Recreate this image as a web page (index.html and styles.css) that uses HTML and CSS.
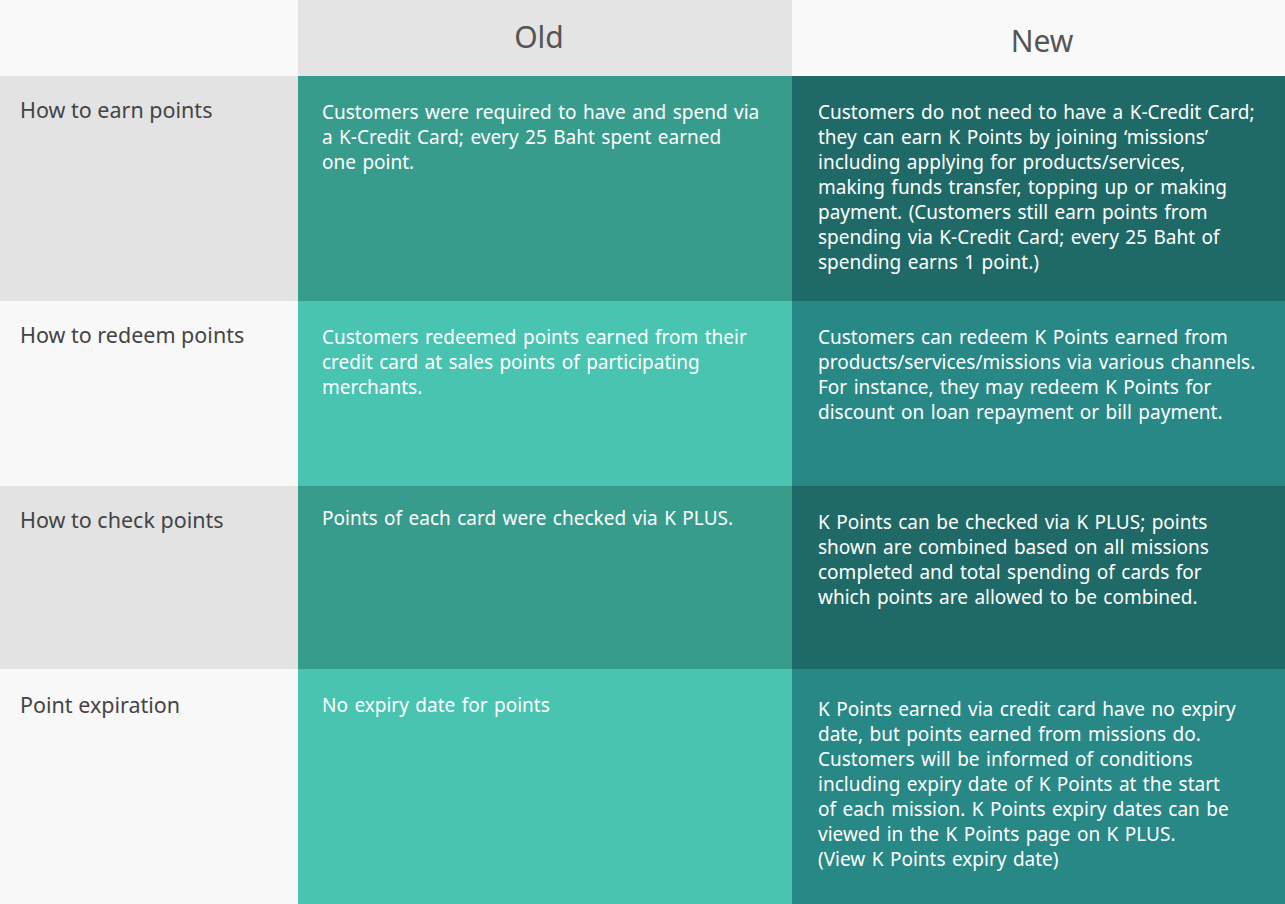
FILE: index.html
```html
<!DOCTYPE html>
<html lang="en">
<head>
<meta charset="utf-8">
<title>K Points comparison</title>
<link rel="stylesheet" href="styles.css">
</head>
<body>
<div class="table">
  <div class="cell head-blank"></div>
  <div class="cell head head-old">Old</div>
  <div class="cell head head-new">New</div>

  <div class="cell label dark">How to earn points</div>
  <div class="cell old dark">Customers were required to have and spend via a K-Credit Card; every 25 Baht spent earned one point.</div>
  <div class="cell new dark">Customers do not need to have a K-Credit Card; they can earn K Points by joining ‘missions’ including applying for products/services, making funds transfer, topping up or making payment. (Customers still earn points from spending via K-Credit Card; every 25 Baht of spending earns 1 point.)</div>

  <div class="cell label light">How to redeem points</div>
  <div class="cell old light">Customers redeemed points earned from their credit card at sales points of participating merchants.</div>
  <div class="cell new light">Customers can redeem K Points earned from products/services/missions via various channels. For instance, they may redeem K Points for discount on loan repayment or bill payment.</div>

  <div class="cell label dark">How to check points</div>
  <div class="cell old dark raised">Points of each card were checked via K PLUS.</div>
  <div class="cell new dark narrow">K Points can be checked via K PLUS; points shown are combined based on all missions completed and total spending of cards for which points are allowed to be combined.</div>

  <div class="cell label light last">Point expiration</div>
  <div class="cell old light">No expiry date for points</div>
  <div class="cell new light medium">K Points earned via credit card have no expiry date, but points earned from missions do. Customers will be informed of conditions including expiry date of K Points at the start of each mission. K Points expiry dates can be viewed in the K Points page on K PLUS.<br>(View K Points expiry date)</div>
</div>
</body>
</html>
```

FILE: styles.css
```css
* { box-sizing: border-box; }
html, body { margin: 0; padding: 0; background: #f9f9f9; }
body { font-family: "Noto Sans", "Open Sans", sans-serif; }

.table {
  display: grid;
  grid-template-columns: 298px 494px 493px;
  grid-template-rows: 76px 225px 185px 183px 235px;
  width: 1285px;
  height: 904px;
}

.cell { font-size: 19px; line-height: 25px; color: #fff; word-spacing: 1.5px; }

.head-blank { background: #f9f9f9; }
.head {
  display: flex;
  align-items: center;
  justify-content: center;
  font-size: 30px;
  color: #555;
  word-spacing: 0;
}
.head-old { background: #e4e4e4; padding: 0 12px 4px 0; }
.head-new { background: #f9f9f9; padding: 4px 0 0 7px; }

.label {
  padding: 20px 20px;
  font-size: 21.5px;
  line-height: 28px;
  color: #444;
  word-spacing: 0;
}
.label.last { padding-top: 22px; }
.label.dark { background: #e3e3e3; }
.label.light { background: #f8f8f8; }

.old { padding: 24px 31px 20px 24px; }
.old.raised { padding-top: 20px; }
.old.dark { background: #379c8c; }
.old.light { background: #48c4b1; }

.new { padding: 24px 27px 20px 26px; }
.new.narrow { padding-top: 24px; padding-right: 60px; }
.new.medium { padding-top: 28px; padding-right: 45px; }
.new.dark { background: #1f6a67; }
.new.light { background: #288886; }
```
